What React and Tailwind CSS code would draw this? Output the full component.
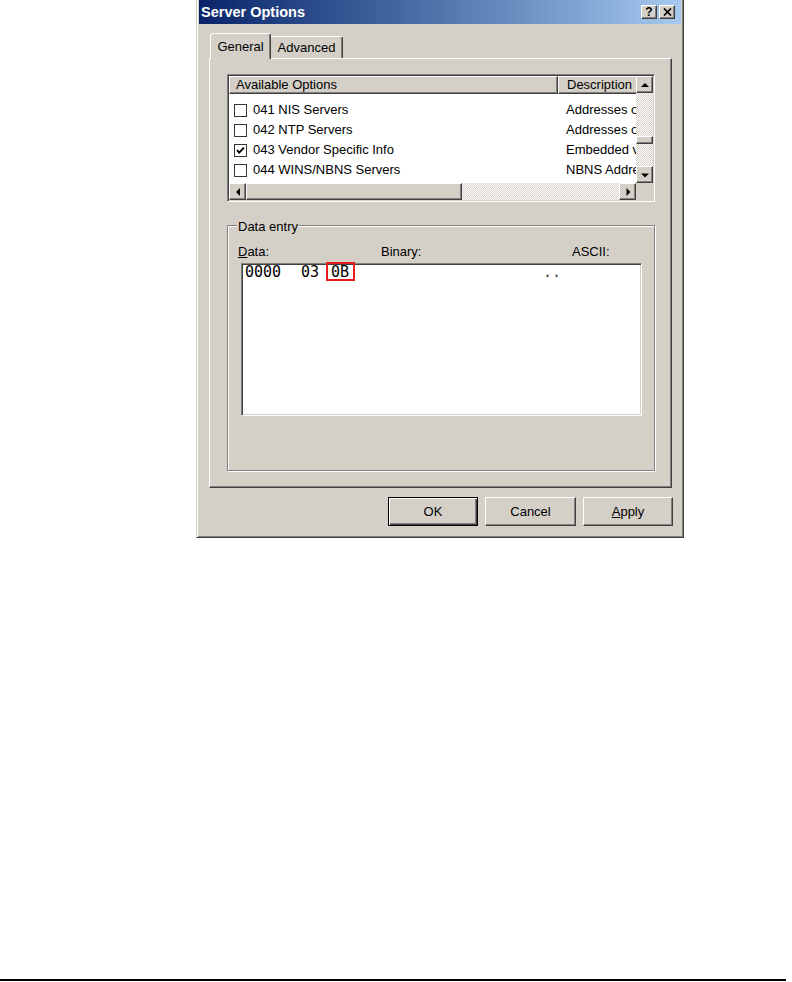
import React from "react";

const face = "bg-[#d4d0c8]";
const raised =
  "border border-t-white border-l-white border-r-[#404040] border-b-[#404040] shadow-[inset_-1px_-1px_0_#808080]";
const sunken =
  "border border-t-[#808080] border-l-[#808080] border-r-white border-b-white shadow-[inset_1px_1px_0_#404040,inset_-1px_-1px_0_#d4d0c8]";
const dither =
  "bg-[image:repeating-conic-gradient(#ffffff_0_25%,#d4d0c8_0_50%)] bg-[length:2px_2px]";

const arrows = {
  up: "0,6 8,6 4,2",
  down: "0,2.5 8,2.5 4,6.5",
  left: "6,0 6,8 2,4",
  right: "2.5,0 2.5,8 6.5,4",
};

const options = [
  { label: "041 NIS Servers", desc: "Addresses of NIS servers", checked: false },
  { label: "042 NTP Servers", desc: "Addresses of NTP servers", checked: false },
  { label: "043 Vendor Specific Info", desc: "Embedded vendor-specific options", checked: true },
  { label: "044 WINS/NBNS Servers", desc: "NBNS Address(es) in priority order", checked: false },
];

function ScrollBtn({ dir }) {
  return (
    <div className={`w-[17px] h-[17px] shrink-0 ${face} ${raised} flex items-center justify-center`}>
      <svg width="8" height="8" viewBox="0 0 8 8">
        <polygon points={arrows[dir]} fill="#000" />
      </svg>
    </div>
  );
}

function Checkbox({ checked }) {
  return (
    <svg width="13" height="13" viewBox="0 0 13 13" className="shrink-0">
      <rect x="0.5" y="0.5" width="12" height="12" fill="#fff" stroke="#333" />
      {checked && (
        <polyline points="3,6.2 5.2,8.6 10,3.6" fill="none" stroke="#000" strokeWidth="1.9" />
      )}
    </svg>
  );
}

function TitleBtn({ children }) {
  return (
    <div className={`w-[16px] h-[14px] ${face} ${raised} flex items-center justify-center`}>
      {children}
    </div>
  );
}

function Button({ children, w, isDefault }) {
  const edge = isDefault
    ? "border border-black shadow-[inset_1px_1px_0_#ffffff,inset_-1px_-1px_0_#404040,inset_-2px_-2px_0_#808080]"
    : raised;
  return (
    <div className={`${w} h-[29px] ${face} ${edge} flex items-center justify-center`}>
      {children}
    </div>
  );
}

export default function App() {
  return (
    <div className="w-[792px] h-[982px] bg-white flex flex-col font-['Liberation_Sans',Arial,sans-serif] text-[13px] text-black">
      {/* dialog */}
      <div className="ml-[196px] w-[488px] h-[538px] bg-[#d4d0c8] border border-t-0 border-l-[#d4d0c8] border-r-[#404040] border-b-[#404040] shadow-[inset_1px_0_0_#ffffff,inset_-1px_-1px_0_#808080] px-[2px] pb-[2px] flex flex-col">
        {/* title bar */}
        <div className="h-[24px] bg-linear-to-r from-[#0a246a] to-[#a6caf0] flex items-center pl-[2px] pr-[6px]">
          <span className="text-white font-bold text-[14.5px] leading-none">Server Options</span>
          <div className="ml-auto flex gap-[2px]">
            <TitleBtn>
              <span className="font-bold text-[12px] leading-none">?</span>
            </TitleBtn>
            <TitleBtn>
              <svg width="9" height="8" viewBox="0 0 9 8">
                <path d="M1 0.5 L8 7.5 M8 0.5 L1 7.5" stroke="#000" strokeWidth="1.7" />
              </svg>
            </TitleBtn>
          </div>
        </div>

        <div className="pl-[10px] pr-[9px] pt-[9px] flex flex-col">
          {/* tabs */}
          <div className="flex items-end h-[25px] pl-[1px]">
            <div className="relative z-10 w-[61px] h-[26px] -mb-[1px] bg-[#d4d0c8] border-l border-t border-white border-r border-r-[#404040] rounded-t-[3px] shadow-[inset_-1px_0_0_#808080] flex items-center justify-center">
              General
            </div>
            <div className="w-[72px] h-[22px] border-t border-white border-r border-r-[#404040] rounded-tr-[3px] shadow-[inset_-1px_0_0_#808080] flex items-center justify-center">
              Advanced
            </div>
          </div>

          {/* tab panel */}
          <div className="h-[430px] bg-[#d4d0c8] border border-t-white border-l-white border-r-[#404040] border-b-[#404040] shadow-[inset_-1px_-1px_0_#808080] pl-[17px] pt-[15px] flex flex-col">
            {/* list view */}
            <div className={`w-[428px] h-[128px] bg-white ${sunken} p-[1px] flex flex-col`}>
              <div className="flex h-[107px]">
                <div className="w-[407px] overflow-hidden">
                  <div className="flex h-[18px] w-[420px]">
                    <div className={`w-[329px] shrink-0 ${face} ${raised} pl-[6px] flex items-center`}>
                      Available Options
                    </div>
                    <div className={`w-[91px] shrink-0 ${face} ${raised} pl-[8px] flex items-center`}>
                      Description
                    </div>
                  </div>
                  <div className="pt-[6px] flex flex-col">
                    {options.map((o) => (
                      <div key={o.label} className="flex h-[20px] items-center">
                        <div className="w-[329px] shrink-0 pl-[5px] flex items-center gap-[6px]">
                          <Checkbox checked={o.checked} />
                          <span>{o.label}</span>
                        </div>
                        <div className="w-[78px] shrink-0 pl-[8px] overflow-hidden whitespace-nowrap">
                          {o.desc}
                        </div>
                      </div>
                    ))}
                  </div>
                </div>
                {/* vertical scrollbar */}
                <div className="w-[17px] flex flex-col">
                  <ScrollBtn dir="up" />
                  <div className={`h-[43px] ${dither}`} />
                  <div className={`h-[8px] ${face} ${raised}`} />
                  <div className={`flex-1 ${dither}`} />
                  <ScrollBtn dir="down" />
                </div>
              </div>
              {/* horizontal scrollbar */}
              <div className="flex h-[17px]">
                <div className="w-[407px] flex">
                  <ScrollBtn dir="left" />
                  <div className={`w-[216px] ${face} ${raised}`} />
                  <div className={`flex-1 ${dither}`} />
                  <ScrollBtn dir="right" />
                </div>
                <div className={`w-[17px] ${face}`} />
              </div>
            </div>

            {/* data entry group */}
            <div className="mt-[23px] w-[428px] h-[246px] border border-[#808080] shadow-[inset_1px_1px_0_#ffffff,1px_1px_0_#ffffff] flex flex-col">
              <div className="-mt-[7px] ml-[9px] w-fit px-[1px] bg-[#d4d0c8] leading-[15px]">Data entry</div>
              <div className="mt-[10px] h-[16px] pl-[10px] flex items-center">
                <span className="w-[143px]">
                  <span className="underline">D</span>ata:
                </span>
                <span className="w-[191px]">Binary:</span>
                <span>ASCII:</span>
              </div>
              <div className={`relative mt-[3px] ml-[13px] w-[401px] h-[153px] bg-white ${sunken}`}>
                <div className="flex pl-[3px] font-['DejaVu_Sans_Mono',monospace] text-[15px] leading-[16px] whitespace-pre">
                  <span className="w-[56px]">0000</span>
                  <span className="w-[30px]">03</span>
                  <span className="w-[212px]">0B</span>
                  <span className="text-[#444]">..</span>
                </div>
                <div className="absolute left-[84px] -top-[2px] w-[29px] h-[19px] border-2 border-[#e41e1e]" />
              </div>
            </div>
          </div>

          {/* buttons */}
          <div className="mt-[9px] -mr-[1px] flex justify-end gap-[7px]">
            <Button w="w-[90px]" isDefault>OK</Button>
            <Button w="w-[91px]">Cancel</Button>
            <Button w="w-[90px]">
              <span>
                <span className="underline">A</span>pply
              </span>
            </Button>
          </div>
        </div>
      </div>

      <div className="mt-auto mb-[1px] w-[786px] h-[2px] bg-black" />
    </div>
  );
}
